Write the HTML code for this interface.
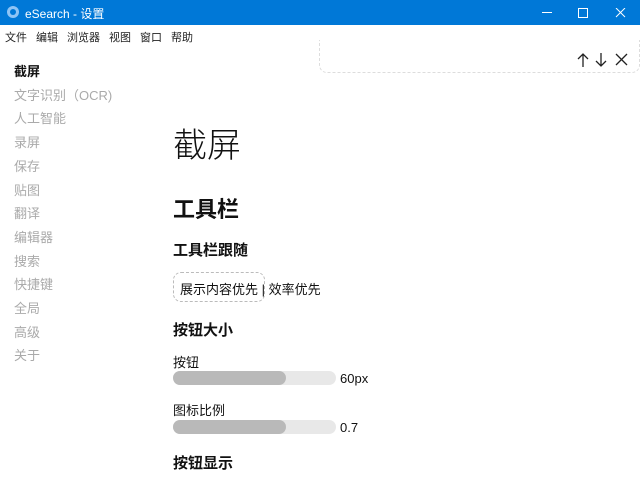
<!DOCTYPE html>
<html><head><meta charset="utf-8"><style>
*{margin:0;padding:0;box-sizing:border-box}
body{width:640px;height:483px;overflow:hidden;background:#fff;font-family:"Liberation Sans","Noto Sans CJK SC",sans-serif;position:relative;color:#111}
.title{position:absolute;left:0;top:0;width:640px;height:25px;background:#0078d7;color:#fff;font-size:12px}
.title .t{position:absolute;left:25px;top:5px}
.menu{position:absolute;top:29px;left:5px;font-size:11px;color:#222}
.menu span{margin-right:9px}
.nav{position:absolute;left:14px;top:60px;font-size:13px;color:#aaa;line-height:23.7px}
.nav div:first-child{color:#111;font-weight:bold}
.find{position:absolute;left:319px;top:40px;width:321px;height:33px;border:1px dashed #ddd;border-top:none;border-radius:0 0 8px 8px}
.abs{position:absolute}
.lbl{position:absolute;left:173px;font-size:13px;line-height:16px}
.bar{position:absolute;left:173px;width:163px;height:14px;border-radius:7px;background:#e8e8e8}
.bar i{display:block;height:14px;width:113px;border-radius:7px;background:#b9b9b9}
</style></head><body>
<div class="title"><svg class="abs" style="left:6px;top:5px" width="14" height="14"><circle cx="7" cy="7" r="6" fill="#8fc4f5"/><circle cx="7" cy="7" r="3" fill="#0078d7"/></svg><span class="t">eSearch - 设置</span>
<svg class="abs" style="left:540px;top:8px" width="90" height="10" stroke="#fff" fill="none"><path d="M2 4.5h10"/><rect x="38.5" y="0.5" width="9" height="9"/><path d="M76 0l9 9M85 0l-9 9"/></svg></div>
<div class="menu"><span>文件</span><span>编辑</span><span>浏览器</span><span>视图</span><span>窗口</span><span>帮助</span></div>
<div class="nav"><div>截屏</div><div>文字识别（OCR)</div><div>人工智能</div><div>录屏</div><div>保存</div><div>贴图</div><div>翻译</div><div>编辑器</div><div>搜索</div><div>快捷键</div><div>全局</div><div>高级</div><div>关于</div></div>
<div class="find"></div>
<svg class="abs" style="left:576px;top:52px" width="56" height="16" stroke="#222" fill="none" stroke-width="1.3"><path d="M7 15V2M2 7l5-5 5 5"/><path d="M25 1v13M20 9l5 5 5-5"/><path d="M40 2l11 11M51 2l-11 11"/></svg>
<div class="abs" style="left:173px;top:118px;font-size:34px;font-weight:300">截屏</div>
<div class="abs" style="left:173px;top:192px;font-size:22px;font-weight:bold">工具栏</div>
<div class="abs" style="left:173px;top:239px;font-size:15px;font-weight:bold">工具栏跟随</div>
<div class="abs" style="left:173px;top:272px;width:92px;height:30px;border:1px dashed #bbb;border-radius:8px"></div>
<div class="abs" style="left:180px;top:279px;font-size:13px">展示内容优先 | 效率优先</div>
<div class="abs" style="left:173px;top:319px;font-size:15px;font-weight:bold">按钮大小</div>
<div class="lbl" style="top:355px">按钮</div>
<div class="bar" style="top:371px"><i></i></div>
<div class="abs" style="left:340px;top:371px;font-size:13px">60px</div>
<div class="lbl" style="top:403px">图标比例</div>
<div class="bar" style="top:420px"><i></i></div>
<div class="abs" style="left:340px;top:420px;font-size:13px">0.7</div>
<div class="abs" style="left:173px;top:452px;font-size:15px;font-weight:bold">按钮显示</div>
</body></html>
